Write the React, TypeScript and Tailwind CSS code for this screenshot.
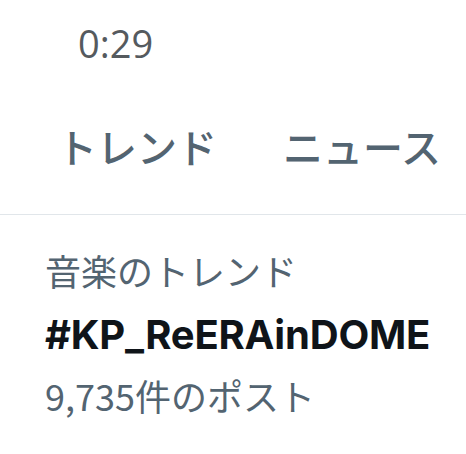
export default function App() {
  const jp = { fontFamily: '"Noto Sans CJK JP", "Noto Sans", sans-serif' };
  return (
    <div className="w-[466px] h-[454px] bg-white overflow-hidden" style={jp}>
      <div className="h-[92px] pl-[78px] pt-[20px] text-[38px] leading-[46px] text-[#555a5e]" style={{ fontFamily: '"Open Sans", sans-serif' }}>
        0:29
      </div>
      <div className="flex h-[122px] items-start pt-[24px] text-[40px] leading-[60px] font-medium text-[#536471]">
        <div className="pl-[57px] w-[283px]">トレンド</div>
        <div>ニュース</div>
      </div>
      <div className="h-px bg-[#e1e6ea]" />
      <div className="pl-[45px] pt-[30px]">
        <div className="text-[36px] leading-[50px] text-[#536471]">音楽のトレンド</div>
        <div className="mt-[14px] text-[40px] leading-[52px] font-bold tracking-[-0.2px] text-[#0f1419]" style={{ fontFamily: 'Inter, sans-serif' }}>
          #KP_ReERAinDOME
        </div>
        <div className="mt-[9px] text-[36px] leading-[50px] text-[#536471]">9,735件のポスト</div>
      </div>
    </div>
  );
}
